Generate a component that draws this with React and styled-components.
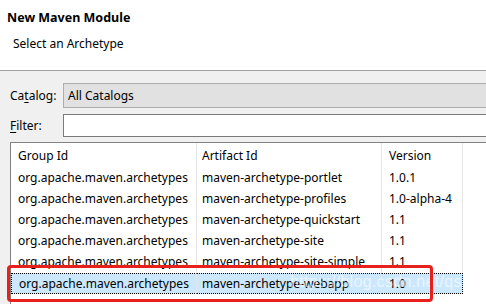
import React from 'react'
import styled, { createGlobalStyle } from 'styled-components'

const GlobalStyle = createGlobalStyle`
    html, body {
        margin: 0;
        padding: 0;
        background: #f0f0f0;
    }
    * {
        box-sizing: border-box;
    }
`

const rows = [
    { group: 'org.apache.maven.archetypes', artifact: 'maven-archetype-portlet', version: '1.0.1' },
    { group: 'org.apache.maven.archetypes', artifact: 'maven-archetype-profiles', version: '1.0-alpha-4' },
    { group: 'org.apache.maven.archetypes', artifact: 'maven-archetype-quickstart', version: '1.1' },
    { group: 'org.apache.maven.archetypes', artifact: 'maven-archetype-site', version: '1.1' },
    { group: 'org.apache.maven.archetypes', artifact: 'maven-archetype-site-simple', version: '1.1' },
    { group: 'org.apache.maven.archetypes', artifact: 'maven-archetype-webapp', version: '1.0', selected: true },
]

export default function App() {
    return (
        <Window>
            <GlobalStyle />
            <Header>
                <Title>New Maven Module</Title>
                <Subtitle>Select an Archetype</Subtitle>
            </Header>
            <Body>
                <FormRow>
                    <Label>Ca<u>t</u>alog:</Label>
                    <Combo>All Catalogs</Combo>
                </FormRow>
                <FormRow>
                    <Label><u>F</u>ilter:</Label>
                    <TextField />
                </FormRow>
                <Table>
                    <HeadCell>Group Id</HeadCell>
                    <HeadCell>Artifact Id</HeadCell>
                    <HeadCell>Version</HeadCell>
                    <Filler />
                    {rows.map((r, i) => (
                        <Row key={i} $selected={r.selected}>
                            <Cell>{r.group}</Cell>
                            <Cell>{r.artifact}</Cell>
                            <Cell>{r.version}</Cell>
                            <Filler />
                        </Row>
                    ))}
                </Table>
            </Body>
            <Watermark>https://blog.csdn.net/qsbbl</Watermark>
            <Annotation />
        </Window>
    )
}

const Window = styled.div`
    position: relative;
    width: 486px;
    height: 304px;
    overflow: hidden;
    background: #f0f0f0;
    font-family: "Noto Sans", "Liberation Sans", sans-serif;
    font-size: 12px;
    color: #000;
`

const Header = styled.div`
    height: 70px;
    background: #fff;
    padding: 10px 0 0 7px;
`

const Title = styled.div`
    font-weight: bold;
    font-size: 12.5px;
    line-height: 16px;
`

const Subtitle = styled.div`
    margin-top: 10px;
    padding-left: 6px;
    line-height: 16px;
`

const Body = styled.div`
    border-top: 1px solid #a0a0a0;
    padding: 12px 0 0 10px;
    display: flex;
    flex-direction: column;
    gap: 6px;
`

const FormRow = styled.div`
    display: flex;
    align-items: center;
    margin-right: -20px;
`

const Label = styled.div`
    width: 53px;
    line-height: 16px;

    u {
        text-underline-offset: 2px;
    }
`

const Combo = styled.div`
    flex: 1;
    height: 25px;
    line-height: 23px;
    padding-left: 4px;
    background: #e1e1e1;
    border: 1px solid #adadad;
`

const TextField = styled.div`
    flex: 1;
    height: 23px;
    background: #fff;
    border: 1px solid #7a7a7a;
`

const Table = styled.div`
    margin-top: -1px;
    margin-right: -20px;
    display: grid;
    grid-template-columns: 186px 185px 81px 1fr;
    grid-auto-rows: 21px;
    grid-template-rows: 25px;
    background: #fff;
    border-top: 1px solid #828282;
    border-left: 1px solid #828282;
    height: 200px;
`

const HeadCell = styled.div`
    line-height: 25px;
    padding-left: 7px;
    border-right: 1px solid #e5e5e5;
    white-space: nowrap;

    &:nth-child(2) {
        padding-left: 5px;
    }
`

const Filler = styled.div``

const Row = styled.div`
    display: contents;

    & > div:not(:last-child) {
        background: ${p => (p.$selected ? '#cce8ff' : 'transparent')};
        border-top: ${p => (p.$selected ? '1px dotted #000' : 'none')};
        border-bottom: ${p => (p.$selected ? '1px dotted #000' : 'none')};
    }
    & > div:first-child {
        border-left: ${p => (p.$selected ? '1px dotted #000' : 'none')};
    }
    & > div:nth-child(3) {
        border-right: ${p => (p.$selected ? '1px dotted #000' : '1px solid #e5e5e5')};
    }
`

const Cell = styled.div`
    line-height: 19px;
    padding-left: 7px;
    white-space: nowrap;
    border-right: 1px solid #e5e5e5;

    &:nth-child(2) {
        padding-left: 5px;
    }
`

const Watermark = styled.div`
    position: absolute;
    left: 290px;
    top: 273px;
    font-family: "Liberation Sans", sans-serif;
    font-size: 16px;
    letter-spacing: 0.3px;
    color: rgba(255, 255, 255, 0.6);
    white-space: nowrap;
    pointer-events: none;
`

const Annotation = styled.div`
    position: absolute;
    left: 7px;
    top: 265px;
    width: 426px;
    height: 37px;
    border: 3px solid #e8201c;
    border-radius: 4px;
    pointer-events: none;
`
